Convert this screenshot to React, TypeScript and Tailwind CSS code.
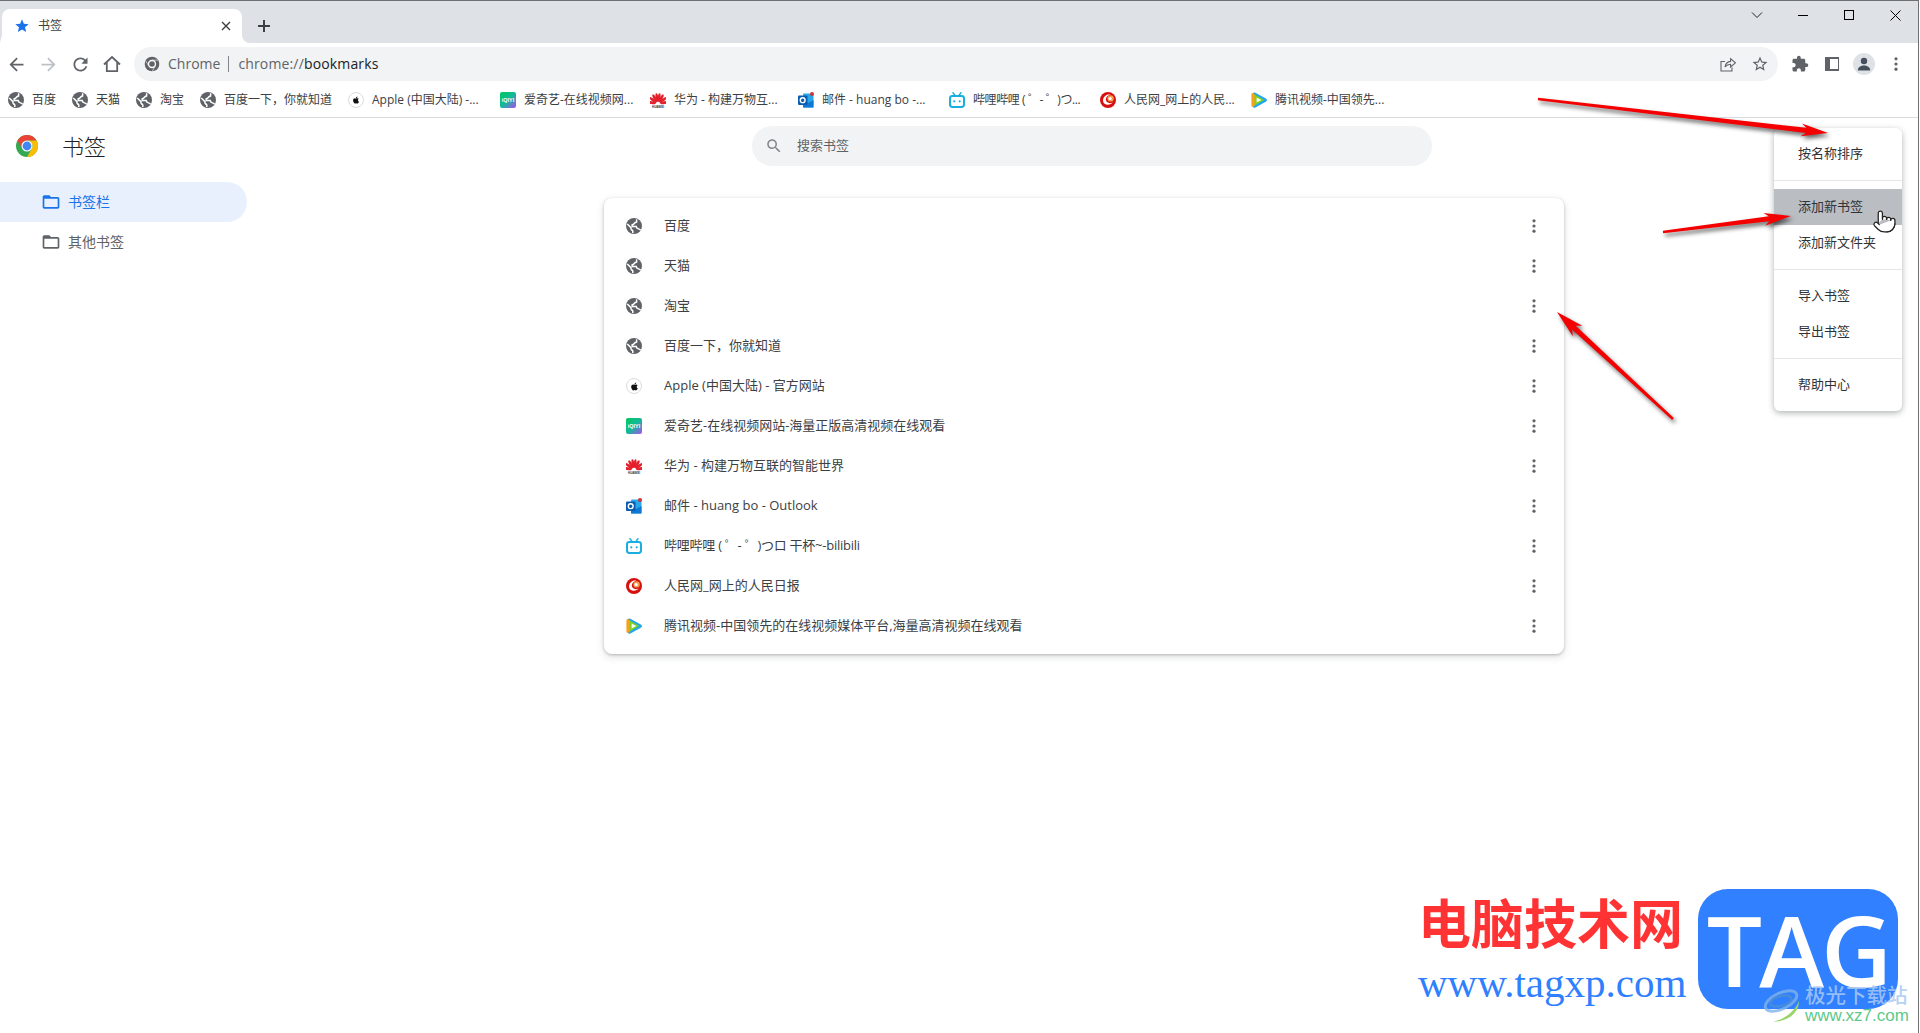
import React from "react";
import { FaApple } from "react-icons/fa";
import { Pointer } from "lucide-react";

const G = "#5f6368";

function M({ d, size = 24, color = G, className = "" }: { d: string; size?: number; color?: string; className?: string }) {
  return (
    <svg width={size} height={size} viewBox="0 0 24 24" fill={color} className={className}>
      <path d={d} />
    </svg>
  );
}

const STAR = "M12 17.27L18.18 21l-1.64-7.03L22 9.24l-7.19-.61L12 2 9.19 8.63 2 9.24l5.46 4.73L5.82 21z";
const STAR_O =
  "M22 9.24l-7.19-.62L12 2 9.19 8.63 2 9.24l5.46 4.73L5.82 21 12 17.27 18.18 21l-1.63-7.03L22 9.24zM12 15.4l-3.76 2.27 1-4.28-3.32-2.88 4.38-.38L12 6.1l1.71 4.04 4.38.38-3.32 2.88 1 4.28L12 15.4z";
const FOLDER =
  "M20 6h-8l-2-2H4c-1.1 0-1.99.9-1.99 2L2 18c0 1.1.9 2 2 2h16c1.1 0 2-.9 2-2V8c0-1.1-.9-2-2-2zm0 12H4V8h16v10z";
const SEARCH =
  "M15.5 14h-.79l-.28-.27C15.41 12.59 16 11.11 16 9.5 16 5.91 13.09 3 9.5 3S3 5.91 3 9.5 5.91 16 9.5 16c1.61 0 3.09-.59 4.23-1.57l.27.28v.79l5 4.99L20.49 19l-4.99-5zm-6 0C7.01 14 5 11.99 5 9.5S7.01 5 9.5 5 14 7.01 14 9.5 11.99 14 9.5 14z";
const BACK = "M20 11H7.83l5.59-5.59L12 4l-8 8 8 8 1.41-1.41L7.83 13H20v-2z";
const REFRESH =
  "M17.65 6.35C16.2 4.9 14.21 4 12 4c-4.42 0-7.99 3.58-7.99 8s3.57 8 7.99 8c3.73 0 6.84-2.55 7.73-6h-2.08c-.82 2.33-3.04 4-5.65 4-3.31 0-6-2.69-6-6s2.69-6 6-6c1.66 0 3.14.69 4.22 1.78L13 11h7V4l-2.35 2.35z";
const PUZZLE =
  "M20.5 11H19V7c0-1.1-.9-2-2-2h-4V3.5C13 2.12 11.88 1 10.5 1S8 2.12 8 3.5V5H4c-1.1 0-1.99.9-1.99 2v3.8H3.5c1.49 0 2.7 1.21 2.7 2.7s-1.21 2.7-2.7 2.7H2V20c0 1.1.9 2 2 2h3.8v-1.5c0-1.49 1.21-2.7 2.7-2.7 1.49 0 2.7 1.21 2.7 2.7V22H17c1.1 0 2-.9 2-2v-4h1.5c1.38 0 2.5-1.12 2.5-2.5S21.88 11 20.5 11z";

function Globe() {
  return (
    <svg width={16} height={16} viewBox="0 0 16 16" fill="none">
      <circle cx="8" cy="8" r="8" fill={G} />
      <path d="M1.2 6L5 9.6V11c0 1 1.8 1 1.8 2.2V15" stroke="#fff" strokeWidth="1.5" />
      <path d="M14.6 12.2C13.6 10.4 10.4 11.2 10.2 8.6H6.2V6.8C8.4 6.8 8 4.4 10.6 4V1.2" stroke="#fff" strokeWidth="1.5" />
    </svg>
  );
}

function ChromeLogo({ size }: { size: number }) {
  return (
    <svg width={size} height={size} viewBox="1 1 22 22">
      <circle cx="12" cy="12" r="11" fill="#34a853" />
      <path d="M12 6.5H21.53A11 11 0 0 0 2.47 6.5L7.24 14.75A5.5 5.5 0 0 1 12 6.5Z" fill="#ea4335" />
      <path d="M12 6.5H21.53A11 11 0 0 1 12 23L16.76 14.75A5.5 5.5 0 0 0 12 6.5Z" fill="#fbbc04" />
      <circle cx="12" cy="12" r="5.5" fill="#fff" />
      <circle cx="12" cy="12" r="4.4" fill="#4285f4" />
    </svg>
  );
}

function ChromeGray() {
  return (
    <svg width={16} height={16} viewBox="0 0 24 24">
      <circle cx="12" cy="12" r="11" fill={G} />
      <circle cx="12" cy="12" r="6.2" fill="#fff" />
      <circle cx="12" cy="12" r="4.2" fill={G} />
      <path d="M12 6.2H21M7 15L2.8 7.5M17 15L12.5 22.6" stroke="#f1f3f4" strokeWidth="1" />
    </svg>
  );
}

function AppleIcon({ small }: { small?: boolean }) {
  return (
    <span className="flex h-4 w-4 items-center justify-center rounded-full border border-[#dcdcdc] bg-white">
      <FaApple size={small ? 8 : 9} color="#111" />
    </span>
  );
}

function IqiyiIcon() {
  return (
    <svg width={16} height={16} viewBox="0 0 16 16">
      <defs>
        <linearGradient id="iq" x1="0" y1="0" x2="1" y2="1">
          <stop offset="0" stopColor="#00c85a" />
          <stop offset="0.5" stopColor="#12b99a" />
          <stop offset="1" stopColor="#b04df5" />
        </linearGradient>
      </defs>
      <rect width="16" height="16" rx="2" fill="url(#iq)" />
      <text x="8" y="10" textAnchor="middle" fontSize="5.4" fontWeight="700" fill="#fff" fontFamily="Liberation Sans, sans-serif">
        iQIYI
      </text>
    </svg>
  );
}

function HuaweiIcon() {
  const angles = [-78, -52, -29, -9, 9, 29, 52, 78];
  return (
    <svg width={16} height={16} viewBox="0 0 16 16">
      {angles.map((a) => (
        <ellipse key={a} cx="8" cy="5.4" rx="1.35" ry="4.4" fill="#e3202c" transform={`rotate(${a} 8 12)`} />
      ))}
      <text x="8" y="15.8" textAnchor="middle" fontSize="3" fontWeight="700" fill="#333" fontFamily="Liberation Sans, sans-serif">
        HUAWEI
      </text>
    </svg>
  );
}

function OutlookIcon() {
  return (
    <svg width={16} height={16} viewBox="0 0 16 16">
      <rect x="5" y="1.5" width="10.5" height="14" rx="1" fill="#28a8ea" />
      <path d="M5 8l5 3 5.5-3v7.5H5z" fill="#0f78d4" />
      <rect x="0" y="3.5" width="9.5" height="9.5" rx="1" fill="#0a5cb0" />
      <circle cx="4.7" cy="8.2" r="2.4" fill="none" stroke="#fff" strokeWidth="1.4" />
      <circle cx="14" cy="2" r="2" fill="#d13438" />
    </svg>
  );
}

function BiliIcon() {
  return (
    <svg width={16} height={16} viewBox="0 0 16 16" fill="none" stroke="#18aee0">
      <rect x="1" y="4" width="14" height="11" rx="2.4" strokeWidth="2" />
      <path d="M4 0.8L6.2 3.6M12 0.8L9.8 3.6" strokeWidth="1.5" strokeLinecap="round" />
      <circle cx="5.3" cy="9.3" r="1.1" fill="#18aee0" stroke="none" />
      <circle cx="10.7" cy="9.3" r="1.1" fill="#18aee0" stroke="none" />
    </svg>
  );
}

function PeopleIcon() {
  return (
    <svg width={16} height={16} viewBox="0 0 16 16">
      <circle cx="8" cy="8" r="8" fill="#d5100f" />
      <path d="M3 8.4C3.2 4.2 7 1.6 10.6 2.8 7.4 3.2 5.4 6 6 8.6c.6 2.2 3.8 3.6 6.8 1.6C10.8 13.6 3.2 13.8 3 8.4z" fill="#fff" />
      <circle cx="10.6" cy="6.4" r="3.2" fill="#f49a4a" />
      <circle cx="10.1" cy="6.6" r="1.6" fill="#fff" />
    </svg>
  );
}

function TencentIcon() {
  return (
    <svg width={16} height={16} viewBox="0 0 16 16">
      <path d="M1.4 2.4C1.4 .6 3 0 4.4 .8L14.8 6.6c1.6 1 1.6 2.2 0 3.2L4.4 15.4C3 16.2 1.4 15.4 1.4 13.8z" fill="#22a7ee" />
      <path d="M.4 3C.4 1 2 .8 3 1.4L7 8 3 14.6c-1 .8-2.6.4-2.6-1.6z" fill="#f9a11b" />
      <path d="M3.6 2.6L13.2 8 3.6 13.4z" fill="#7ed321" />
      <path d="M5.6 5.4L10.2 8 5.6 10.6z" fill="#fff" />
    </svg>
  );
}

function Dots({ color = G }: { color?: string }) {
  return (
    <svg width={4} height={14} viewBox="0 0 4 14" fill={color}>
      <circle cx="2" cy="1.8" r="1.6" />
      <circle cx="2" cy="7" r="1.6" />
      <circle cx="2" cy="12.2" r="1.6" />
    </svg>
  );
}

function Arrow({ x1, y1, x2, y2, w = 6.5, l = 26 }: { x1: number; y1: number; x2: number; y2: number; w?: number; l?: number }) {
  const len = Math.hypot(x2 - x1, y2 - y1);
  const ux = (x2 - x1) / len;
  const uy = (y2 - y1) / len;
  const nx = -uy;
  const ny = ux;
  const p = (along: number, side: number) => `${x1 + ux * along + nx * side},${y1 + uy * along + ny * side}`;
  const pts = [
    p(0, 1.2),
    p(len - l + 5, 2.6),
    p(len - l, w),
    p(len, 0),
    p(len - l, -w),
    p(len - l + 5, -2.6),
    p(0, -1.2),
  ].join(" ");
  return <polygon points={pts} fill="#f40000" />;
}

const bar = [
  { icon: <Globe />, t: "百度", w: "w-[24px]" },
  { icon: <Globe />, t: "天猫", w: "w-[24px]" },
  { icon: <Globe />, t: "淘宝", w: "w-[24px]" },
  { icon: <Globe />, t: "百度一下，你就知道", w: "w-[108px]" },
  { icon: <AppleIcon small />, t: "Apple (中国大陆) -...", w: "w-[112px]" },
  { icon: <IqiyiIcon />, t: "爱奇艺-在线视频网...", w: "w-[110px]" },
  { icon: <HuaweiIcon />, t: "华为 - 构建万物互...", w: "w-[108px]" },
  { icon: <OutlookIcon />, t: "邮件 - huang bo -...", w: "w-[111px]" },
  { icon: <BiliIcon />, t: "哔哩哔哩 ( ゜- ゜)つ...", w: "w-[111px] tracking-[-0.4px]" },
  { icon: <PeopleIcon />, t: "人民网_网上的人民...", w: "w-[111px]" },
  { icon: <TencentIcon />, t: "腾讯视频-中国领先...", w: "w-[111px]" },
];

const rows = [
  { icon: <Globe />, t: "百度" },
  { icon: <Globe />, t: "天猫" },
  { icon: <Globe />, t: "淘宝" },
  { icon: <Globe />, t: "百度一下，你就知道" },
  { icon: <AppleIcon />, t: "Apple (中国大陆) - 官方网站" },
  { icon: <IqiyiIcon />, t: "爱奇艺-在线视频网站-海量正版高清视频在线观看" },
  { icon: <HuaweiIcon />, t: "华为 - 构建万物互联的智能世界" },
  { icon: <OutlookIcon />, t: "邮件 - huang bo - Outlook" },
  { icon: <BiliIcon />, t: "哔哩哔哩 ( ゜- ゜)つロ 干杯~-bilibili", tight: true },
  { icon: <PeopleIcon />, t: "人民网_网上的人民日报" },
  { icon: <TencentIcon />, t: "腾讯视频-中国领先的在线视频媒体平台,海量高清视频在线观看" },
];

function MenuItem({ t, active }: { t: string; active?: boolean }) {
  return (
    <div className={`flex h-9 items-center pl-6 text-[13px] text-[#303336] ${active ? "bg-[#babdc2]" : ""}`}>{t}</div>
  );
}

function Sep() {
  return <div className="my-2 h-px bg-[#e6e6e6]" />;
}

export default function App() {
  return (
    <div className="relative h-[1033px] w-[1920px] overflow-hidden bg-white font-['Open_Sans','Noto_Sans_CJK_SC',sans-serif] font-normal">
      <div className="h-[1033px] w-[1919px] border-r border-t border-[#6e7072]">
        {/* tab strip */}
        <div className="flex h-[42px] items-end bg-[#dee1e6] pl-[2px]">
          <div className="relative flex h-[34px] w-[240px] items-center rounded-t-[8px] bg-white pl-[12px] pr-[11px]">
            <M d={STAR} size={16} color="#1a73e8" />
            <span className="ml-[8px] flex-1 text-[12px] text-[#3c4043]">书签</span>
            <svg width={10} height={10} viewBox="0 0 10 10" stroke="#3c4043" strokeWidth="1.4">
              <path d="M1 1L9 9M9 1L1 9" />
            </svg>
            <svg width={8} height={8} viewBox="0 0 8 8" className="absolute bottom-0 left-[240px]">
              <path d="M0 0A8 8 0 0 0 8 8H0Z" fill="#fff" />
            </svg>
            <svg width={8} height={8} viewBox="0 0 8 8" className="absolute bottom-0 left-[-2px]">
              <path d="M2 0V8H0Z" fill="#fff" />
            </svg>
          </div>
          <div className="ml-[14px] flex h-[34px] w-4 items-center justify-center">
            <svg width={14} height={14} viewBox="0 0 14 14" stroke="#3c4043" strokeWidth="2">
              <path d="M7 1V13M1 7H13" />
            </svg>
          </div>
          <div className="flex-1" />
          <div className="flex h-[42px] items-start pt-[6px] text-black">
            <div className="flex h-4 w-[46px] items-center justify-center">
              <svg width={12} height={8} viewBox="0 0 12 8" fill="none" stroke="#222" strokeWidth="1">
                <path d="M1 1.5L6 6.5L11 1.5" />
              </svg>
            </div>
            <div className="flex h-4 w-[46px] items-center justify-center">
              <div className="h-px w-[10px] bg-black" />
            </div>
            <div className="flex h-4 w-[46px] items-center justify-center">
              <div className="h-[10px] w-[10px] border border-black" />
            </div>
            <div className="flex h-4 w-[46px] items-center justify-center">
              <svg width={11} height={11} viewBox="0 0 11 11" stroke="#000" strokeWidth="1">
                <path d="M.5 .5L10.5 10.5M10.5 .5L.5 10.5" />
              </svg>
            </div>
          </div>
        </div>
        {/* toolbar */}
        <div className="flex h-[38px] items-center bg-white pr-[6px] pt-1">
          <div className="flex h-8 w-8 items-center justify-center">
            <M d={BACK} size={21} />
          </div>
          <div className="flex h-8 w-8 items-center justify-center">
            <M d={BACK} size={21} color="#bdc1c6" className="rotate-180" />
          </div>
          <div className="flex h-8 w-8 items-center justify-center">
            <M d={REFRESH} size={21} />
          </div>
          <div className="flex h-8 w-8 items-center justify-center">
            <svg width={18} height={18} viewBox="0 0 18 18" fill="none" stroke={G} strokeWidth="1.8">
              <path d="M1 9.5L9 2L17 9.5M3.8 7.5V16.2H14.2V7.5" />
            </svg>
          </div>
          <div className="ml-[6px] flex h-[34px] flex-1 items-center rounded-[17px] bg-[#f1f3f4] pl-[10px] pr-[2px] text-[14px] leading-[18px]">
            <ChromeGray />
            <span className="mb-[1px] ml-2 text-[#5f6368]">Chrome</span>
            <div className="ml-2 h-4 w-px bg-[#80868b]" />
            <span className="mb-[1px] ml-[9px] tracking-[0.15px] text-[#5f6368]">chrome://</span>
            <span className="mb-[1px] tracking-[0.15px] text-[#202124]">bookmarks</span>
            <div className="flex-1" />
            <div className="flex w-8 items-center justify-center">
              <svg width={16} height={16} viewBox="0 0 16 16" fill="none" stroke={G} strokeWidth="1.1">
                <path d="M5 5.5H1V15H12V11.5M5 11C5.6 7.5 8 5.6 10.6 5.4V2.6L15.4 6.8L10.6 11V8.2C8.4 8.2 6.4 9.2 5 11Z" />
              </svg>
            </div>
            <div className="flex w-8 items-center justify-center">
              <M d={STAR_O} size={18} />
            </div>
          </div>
          <div className="ml-[6px] flex h-8 w-8 items-center justify-center">
            <M d={PUZZLE} size={18} />
          </div>
          <div className="flex h-8 w-8 items-center justify-center">
            <div className="flex h-[14px] w-[14px] items-center justify-end bg-[#5f6368] pr-[1px]">
              <div className="h-[10px] w-2 bg-white" />
            </div>
          </div>
          <div className="flex h-8 w-8 items-center justify-center">
            <div className="flex h-[22px] w-[22px] items-center justify-center rounded-full bg-[#dee1e6]">
              <svg width={14} height={14} viewBox="0 0 14 14" fill="#45505f">
                <circle cx="7" cy="4" r="3.2" />
                <path d="M0.8 13.5C0.8 10 4 8.6 7 8.6S13.2 10 13.2 13.5Z" />
              </svg>
            </div>
          </div>
          <div className="flex h-8 w-8 items-center justify-center">
            <Dots />
          </div>
        </div>
        {/* bookmarks bar */}
        <div className="flex h-[37px] items-center border-b border-[#dadce0] bg-white pl-2 pt-[2px] text-[12px] text-[#3c4043]">
          {bar.map((b, i) => (
            <div key={i} className="mr-4 flex items-center gap-2">
              <span className="flex h-4 w-4 shrink-0 items-center justify-center">{b.icon}</span>
              <span className={`${b.w} overflow-hidden whitespace-nowrap`}>{b.t}</span>
            </div>
          ))}
        </div>
        {/* page header */}
        <div className="flex h-[56px] items-center">
          <div className="flex w-[752px] items-center gap-6 pl-4">
            <ChromeLogo size={22} />
            <span className="text-[22px] font-light leading-none text-[#202124]">书签</span>
          </div>
          <div className="flex h-10 w-[680px] items-center rounded-[20px] bg-[#f1f3f4] pl-[13px]">
            <M d={SEARCH} size={18} color="#80868b" />
            <span className="ml-[14px] text-[13px] text-[#5f6368]">搜索书签</span>
          </div>
        </div>
        {/* body */}
        <div className="flex pt-2">
          <div className="w-[247px] shrink-0 text-[14px] leading-[18px]">
            <div className="flex h-10 items-center rounded-r-[20px] bg-[#e8f0fe] pl-[41px] text-[#1a73e8]">
              <M d={FOLDER} size={20} color="#1a73e8" />
              <span className="mb-[1px] ml-[7px]">书签栏</span>
            </div>
            <div className="flex h-10 items-center pl-[41px] text-[#5f6368]">
              <M d={FOLDER} size={20} />
              <span className="mb-[1px] ml-[7px]">其他书签</span>
            </div>
          </div>
          <div className="pl-[357px] pt-4">
            <div className="w-[960px] rounded-[8px] bg-white py-2 shadow-[0_1px_3px_rgba(60,64,67,0.3),0_3px_8px_rgba(60,64,67,0.15)]">
              {rows.map((r, i) => (
                <div key={i} className="flex h-10 items-center pl-[22px] pr-[28px] text-[13px] text-[#3c4043]">
                  <span className="flex h-4 w-4 shrink-0 items-center justify-center">{r.icon}</span>
                  <span className={`ml-[22px] flex-1 whitespace-nowrap ${r.tight ? "tracking-[-0.25px]" : ""}`}>{r.t}</span>
                  <Dots />
                </div>
              ))}
            </div>
          </div>
        </div>
      </div>

      {/* dropdown menu */}
      <div className="absolute left-[1774px] top-[128px] w-[128px] rounded-[6px] bg-white py-2 shadow-[0_2px_6px_rgba(60,64,67,0.4)]">
        <MenuItem t="按名称排序" />
        <Sep />
        <MenuItem t="添加新书签" active />
        <MenuItem t="添加新文件夹" />
        <Sep />
        <MenuItem t="导入书签" />
        <MenuItem t="导出书签" />
        <Sep />
        <MenuItem t="帮助中心" />
      </div>

      {/* hand cursor */}
      <div className="absolute left-[1872px] top-[209px]">
        <Pointer size={25} color="#222" fill="#fff" strokeWidth={1.2} />
      </div>

      {/* annotation arrows */}
      <svg width={1920} height={1033} className="pointer-events-none absolute left-0 top-0 drop-shadow-[2px_3px_2px_rgba(0,0,0,0.6)]">
        <Arrow x1={1538} y1={99} x2={1828} y2={133} l={27} w={6.5} />
        <Arrow x1={1663} y1={232} x2={1791} y2={216} l={27} w={6.5} />
        <Arrow x1={1673} y1={419} x2={1557} y2={312} l={28} w={7} />
      </svg>

      {/* watermark */}
      <div className="absolute left-[1418px] top-[892px] whitespace-nowrap text-[53px] font-bold leading-[64px] text-[#ff3333]">电脑技术网</div>
      <div className="absolute left-[1418px] top-[958px] whitespace-nowrap font-['Liberation_Serif',serif] text-[41px] leading-[50px] text-[#2f80ff]">
        www.tagxp.com
      </div>
      <div className="absolute left-[1698px] top-[889px] flex h-[120px] w-[200px] items-center justify-center rounded-[30px] bg-[#3080ff] font-['Open_Sans',sans-serif] text-[98px] font-semibold leading-none tracking-[-3px] text-white">
        TAG
      </div>
      <svg width={44} height={44} viewBox="0 0 44 44" fill="none" className="absolute left-[1761px] top-[981px]">
        <ellipse cx="20" cy="20" rx="17" ry="8" stroke="#7fb2e8" strokeWidth="3" transform="rotate(-25 20 20)" opacity="0.8" />
        <ellipse cx="20" cy="20" rx="11" ry="5" stroke="#4b8fd6" strokeWidth="2.5" transform="rotate(-15 20 20)" opacity="0.8" />
        <path d="M12 41C24 38 34 30 38 20C38 30 30 40 12 41Z" fill="#9ad46a" />
      </svg>
      <div className="absolute left-[1805px] top-[983px] whitespace-nowrap text-[20.5px] font-medium leading-[24px] text-[#a9c9f2]/85">极光下载站</div>
      <div className="absolute left-[1805px] top-[1007px] whitespace-nowrap font-['Liberation_Sans',sans-serif] text-[17px] leading-[18px] text-[#5cc98a]">www.xz7.com</div>
    </div>
  );
}
